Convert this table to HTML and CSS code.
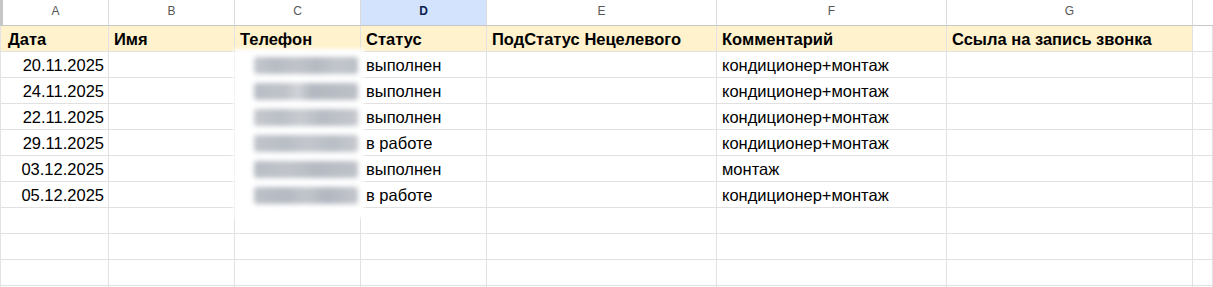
FILE: index.html
```html
<!DOCTYPE html>
<html lang="ru">
<head>
<meta charset="utf-8">
<title>Sheet</title>
<link rel="stylesheet" href="styles.css">
</head>
<body>
<div class="sheet">
  <div class="grid">
    <div class="strip strip-letters"></div>
    <div class="col-letter">A</div>
    <div class="col-letter">B</div>
    <div class="col-letter">C</div>
    <div class="col-letter col-active">D</div>
    <div class="col-letter">E</div>
    <div class="col-letter">F</div>
    <div class="col-letter">G</div>
    <div class="col-letter col-last"></div>

    <div class="strip strip-head"></div>
    <div class="cell head">Дата</div>
    <div class="cell head">Имя</div>
    <div class="cell head">Телефон</div>
    <div class="cell head">Статус</div>
    <div class="cell head">ПодСтатус Нецелевого</div>
    <div class="cell head">Комментарий</div>
    <div class="cell head">Ссыла на запись звонка</div>
    <div class="cell"></div>

    <div class="strip"></div>
    <div class="cell num">20.11.2025</div>
    <div class="cell"></div>
    <div class="cell"></div>
    <div class="cell">выполнен</div>
    <div class="cell"></div>
    <div class="cell">кондиционер+монтаж</div>
    <div class="cell"></div>
    <div class="cell"></div>

    <div class="strip"></div>
    <div class="cell num">24.11.2025</div>
    <div class="cell"></div>
    <div class="cell"></div>
    <div class="cell">выполнен</div>
    <div class="cell"></div>
    <div class="cell">кондиционер+монтаж</div>
    <div class="cell"></div>
    <div class="cell"></div>

    <div class="strip"></div>
    <div class="cell num">22.11.2025</div>
    <div class="cell"></div>
    <div class="cell"></div>
    <div class="cell">выполнен</div>
    <div class="cell"></div>
    <div class="cell">кондиционер+монтаж</div>
    <div class="cell"></div>
    <div class="cell"></div>

    <div class="strip"></div>
    <div class="cell num">29.11.2025</div>
    <div class="cell"></div>
    <div class="cell"></div>
    <div class="cell">в работе</div>
    <div class="cell"></div>
    <div class="cell">кондиционер+монтаж</div>
    <div class="cell"></div>
    <div class="cell"></div>

    <div class="strip"></div>
    <div class="cell num">03.12.2025</div>
    <div class="cell"></div>
    <div class="cell"></div>
    <div class="cell">выполнен</div>
    <div class="cell"></div>
    <div class="cell">монтаж</div>
    <div class="cell"></div>
    <div class="cell"></div>

    <div class="strip"></div>
    <div class="cell num">05.12.2025</div>
    <div class="cell"></div>
    <div class="cell"></div>
    <div class="cell">в работе</div>
    <div class="cell"></div>
    <div class="cell">кондиционер+монтаж</div>
    <div class="cell"></div>
    <div class="cell"></div>

    <div class="strip"></div>
    <div class="cell"></div><div class="cell"></div><div class="cell"></div><div class="cell"></div>
    <div class="cell"></div><div class="cell"></div><div class="cell"></div><div class="cell"></div>

    <div class="strip"></div>
    <div class="cell"></div><div class="cell"></div><div class="cell"></div><div class="cell"></div>
    <div class="cell"></div><div class="cell"></div><div class="cell"></div><div class="cell"></div>

    <div class="strip"></div>
    <div class="cell"></div><div class="cell"></div><div class="cell"></div><div class="cell"></div>
    <div class="cell"></div><div class="cell"></div><div class="cell"></div><div class="cell"></div>

    <div class="strip"></div>
    <div class="cell"></div><div class="cell"></div><div class="cell"></div><div class="cell"></div>
    <div class="cell"></div><div class="cell"></div><div class="cell"></div><div class="cell"></div>
  </div>

  <div class="redact">
    <div class="bar bar-a"></div>
    <div class="bar bar-b"></div>
    <div class="bar bar-c"></div>
    <div class="bar bar-d"></div>
    <div class="bar bar-e"></div>
    <div class="bar bar-f"></div>
  </div>
</div>
</body>
</html>
```

FILE: styles.css
```css
* { box-sizing: border-box; }

html, body {
  margin: 0;
  padding: 0;
  background: #ffffff;
  overflow: hidden;
}

.sheet {
  position: relative;
  width: 1213px;
  height: 287px;
  overflow: hidden;
}

.grid {
  display: grid;
  grid-template-columns: 3px 106px 126px 126px 126px 230px 230px 246px 1fr;
  grid-auto-rows: 26px;
  font-family: "Liberation Sans", Arial, sans-serif;
  font-size: 16.5px;
  color: #000000;
}

.strip {
  background: #ffffff;
  border-left: 1px solid #e3e3e3;
  border-bottom: 1px solid #e1e1e1;
}

.strip-letters {
  background: #c4c7c5;
  border-left: none;
  border-bottom: 1px solid #c4c7c5;
}

.strip-head {
  background: #fff2cc;
}

.col-letter {
  display: flex;
  align-items: center;
  justify-content: center;
  padding-bottom: 4px;
  font-family: "Liberation Sans", Arial, sans-serif;
  font-size: 12px;
  color: #575757;
  background: #ffffff;
  border-right: 1px solid #dadada;
  border-bottom: 1px solid #c4c7c5;
}

.col-active {
  background: #d3e3fd;
  color: #0a2050;
  font-weight: bold;
}

.col-last {
  border-right: none;
}

.cell {
  display: flex;
  align-items: flex-end;
  padding: 0 5px 3px 5px;
  line-height: 18px;
  white-space: nowrap;
  overflow: hidden;
  border-right: 1px solid #e1e1e1;
  border-bottom: 1px solid #e1e1e1;
}

.head {
  background: #fff2cc;
  font-weight: bold;
}

.num {
  justify-content: flex-end;
  padding-right: 4px;
}

/* redacted phone numbers (blurred overlay) */
.redact {
  position: absolute;
  left: 237px;
  top: 52px;
  width: 124px;
  height: 163px;
  background: #ffffff;
  box-shadow: 0 0 4px 3px #ffffff;
  display: flex;
  flex-direction: column;
  gap: 9px;
  padding: 5px 3px 0 17px;
}

.bar {
  height: 17px;
  width: 104px;
  border-radius: 3px;
  filter: blur(2.5px);
  background: linear-gradient(90deg, #c4c8ce 0%, #b7bcc4 20%, #c0c4ca 40%, #b5bac2 60%, #c2c6cc 80%, #bbc0c7 100%);
}

.bar-b {
  background: linear-gradient(90deg, #b9bec6 0%, #bfc3c9 30%, #d0d3d8 42%, #b3b8c0 55%, #bcc0c7 100%);
}

.bar-c {
  background: linear-gradient(90deg, #c6c9ce 0%, #babfc6 25%, #c8cbd0 45%, #b7bcc4 65%, #c5c8cd 100%);
}

.bar-d {
  background: linear-gradient(90deg, #c2c5cb 0%, #b8bdc5 30%, #c3c6cc 50%, #b9bec6 75%, #c6c9ce 100%);
}

.bar-e {
  background: linear-gradient(90deg, #b8bdc5 0%, #c0c4ca 35%, #b5bac2 60%, #bec2c9 100%);
}

.bar-f {
  background: linear-gradient(90deg, #bdc1c8 0%, #b4b9c2 30%, #c1c5cb 50%, #b2b7c0 70%, #c3c6cc 100%);
}
```
